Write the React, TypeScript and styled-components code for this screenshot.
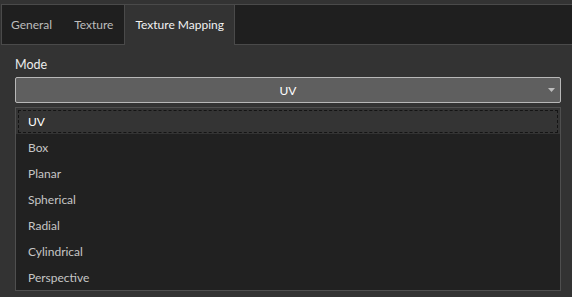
import React, { useState } from 'react';
import styled, { createGlobalStyle } from 'styled-components';

const GlobalStyle = createGlobalStyle`
  html, body {
    margin: 0;
    padding: 0;
    background: #333333;
  }
  body {
    font-family: Lato, "Noto Sans", Arial, sans-serif;
    font-size: 12px;
  }
`;

const Window = styled.div`
  width: 572px;
  height: 297px;
  background: #333333;
  display: flex;
  flex-direction: column;
  overflow: hidden;
`;

const TabBar = styled.div`
  display: flex;
  height: 39px;
  margin: 4px 0 0 1px;
  background: #1f1f1f;
  border-top: 1px solid #4a4a4a;
  border-bottom: 1px solid #4a4a4a;
  border-left: 1px solid #4a4a4a;
`;

const Tab = styled.div<{ $active?: boolean }>`
  display: flex;
  align-items: center;
  padding: 0 10px 1px;
  color: ${(p) => (p.$active ? '#f2f2f2' : '#bdbdbd')};
  background: ${(p) => (p.$active ? '#333333' : 'transparent')};
  border: 1px solid ${(p) => (p.$active ? '#4a4a4a' : 'transparent')};
  border-bottom: none;
  margin: -1px 0 -1px;
  cursor: default;
  white-space: nowrap;

  &:first-child {
    padding-left: 8px;
  }
`;

const Content = styled.div`
  padding: 12px 11px 0 15px;
  display: flex;
  flex-direction: column;
`;

const Label = styled.div`
  color: #ececec;
  font-size: 12.5px;
  line-height: 16px;
  margin-bottom: 4px;
`;

const Select = styled.div`
  position: relative;
  height: 24px;
  border: 1px solid #b8b8b8;
  border-radius: 2px;
  background: #5f5f5f;
  color: #ffffff;
  display: flex;
  align-items: center;
  justify-content: center;
`;

const Caret = styled.svg`
  position: absolute;
  right: 5px;
  top: 10px;
`;

const List = styled.div`
  margin-top: 4px;
  border: 1px solid #4f4f4f;
  background: #212121;
  display: flex;
  flex-direction: column;
`;

const Item = styled.div<{ $selected?: boolean }>`
  position: relative;
  height: 26px;
  display: flex;
  align-items: center;
  padding-left: 12px;
  color: ${(p) => (p.$selected ? '#ffffff' : '#c6c6c6')};
  background: ${(p) => (p.$selected ? '#343434' : 'transparent')};

  ${(p) =>
    p.$selected &&
    `
    &::after {
      content: '';
      position: absolute;
      inset: 2px 2px 1px 2px;
      border: 1px dashed #141414;
    }
  `}
`;

const tabs = ['General', 'Texture', 'Texture Mapping'];
const modes = ['UV', 'Box', 'Planar', 'Spherical', 'Radial', 'Cylindrical', 'Perspective'];

export default function App() {
  const [active, setActive] = useState(2);
  const [mode, setMode] = useState(0);

  return (
    <Window>
      <GlobalStyle />
      <TabBar>
        {tabs.map((t, i) => (
          <Tab key={t} $active={i === active} onClick={() => setActive(i)}>
            {t}
          </Tab>
        ))}
      </TabBar>
      <Content>
        <Label>Mode</Label>
        <Select>
          {modes[mode]}
          <Caret width="7" height="4" viewBox="0 0 7 4">
            <path d="M0 0 H7 L3.5 4 Z" fill="#bdbdbd" />
          </Caret>
        </Select>
        <List>
          {modes.map((m, i) => (
            <Item key={m} $selected={i === mode} onClick={() => setMode(i)}>
              {m}
            </Item>
          ))}
        </List>
      </Content>
    </Window>
  );
}
